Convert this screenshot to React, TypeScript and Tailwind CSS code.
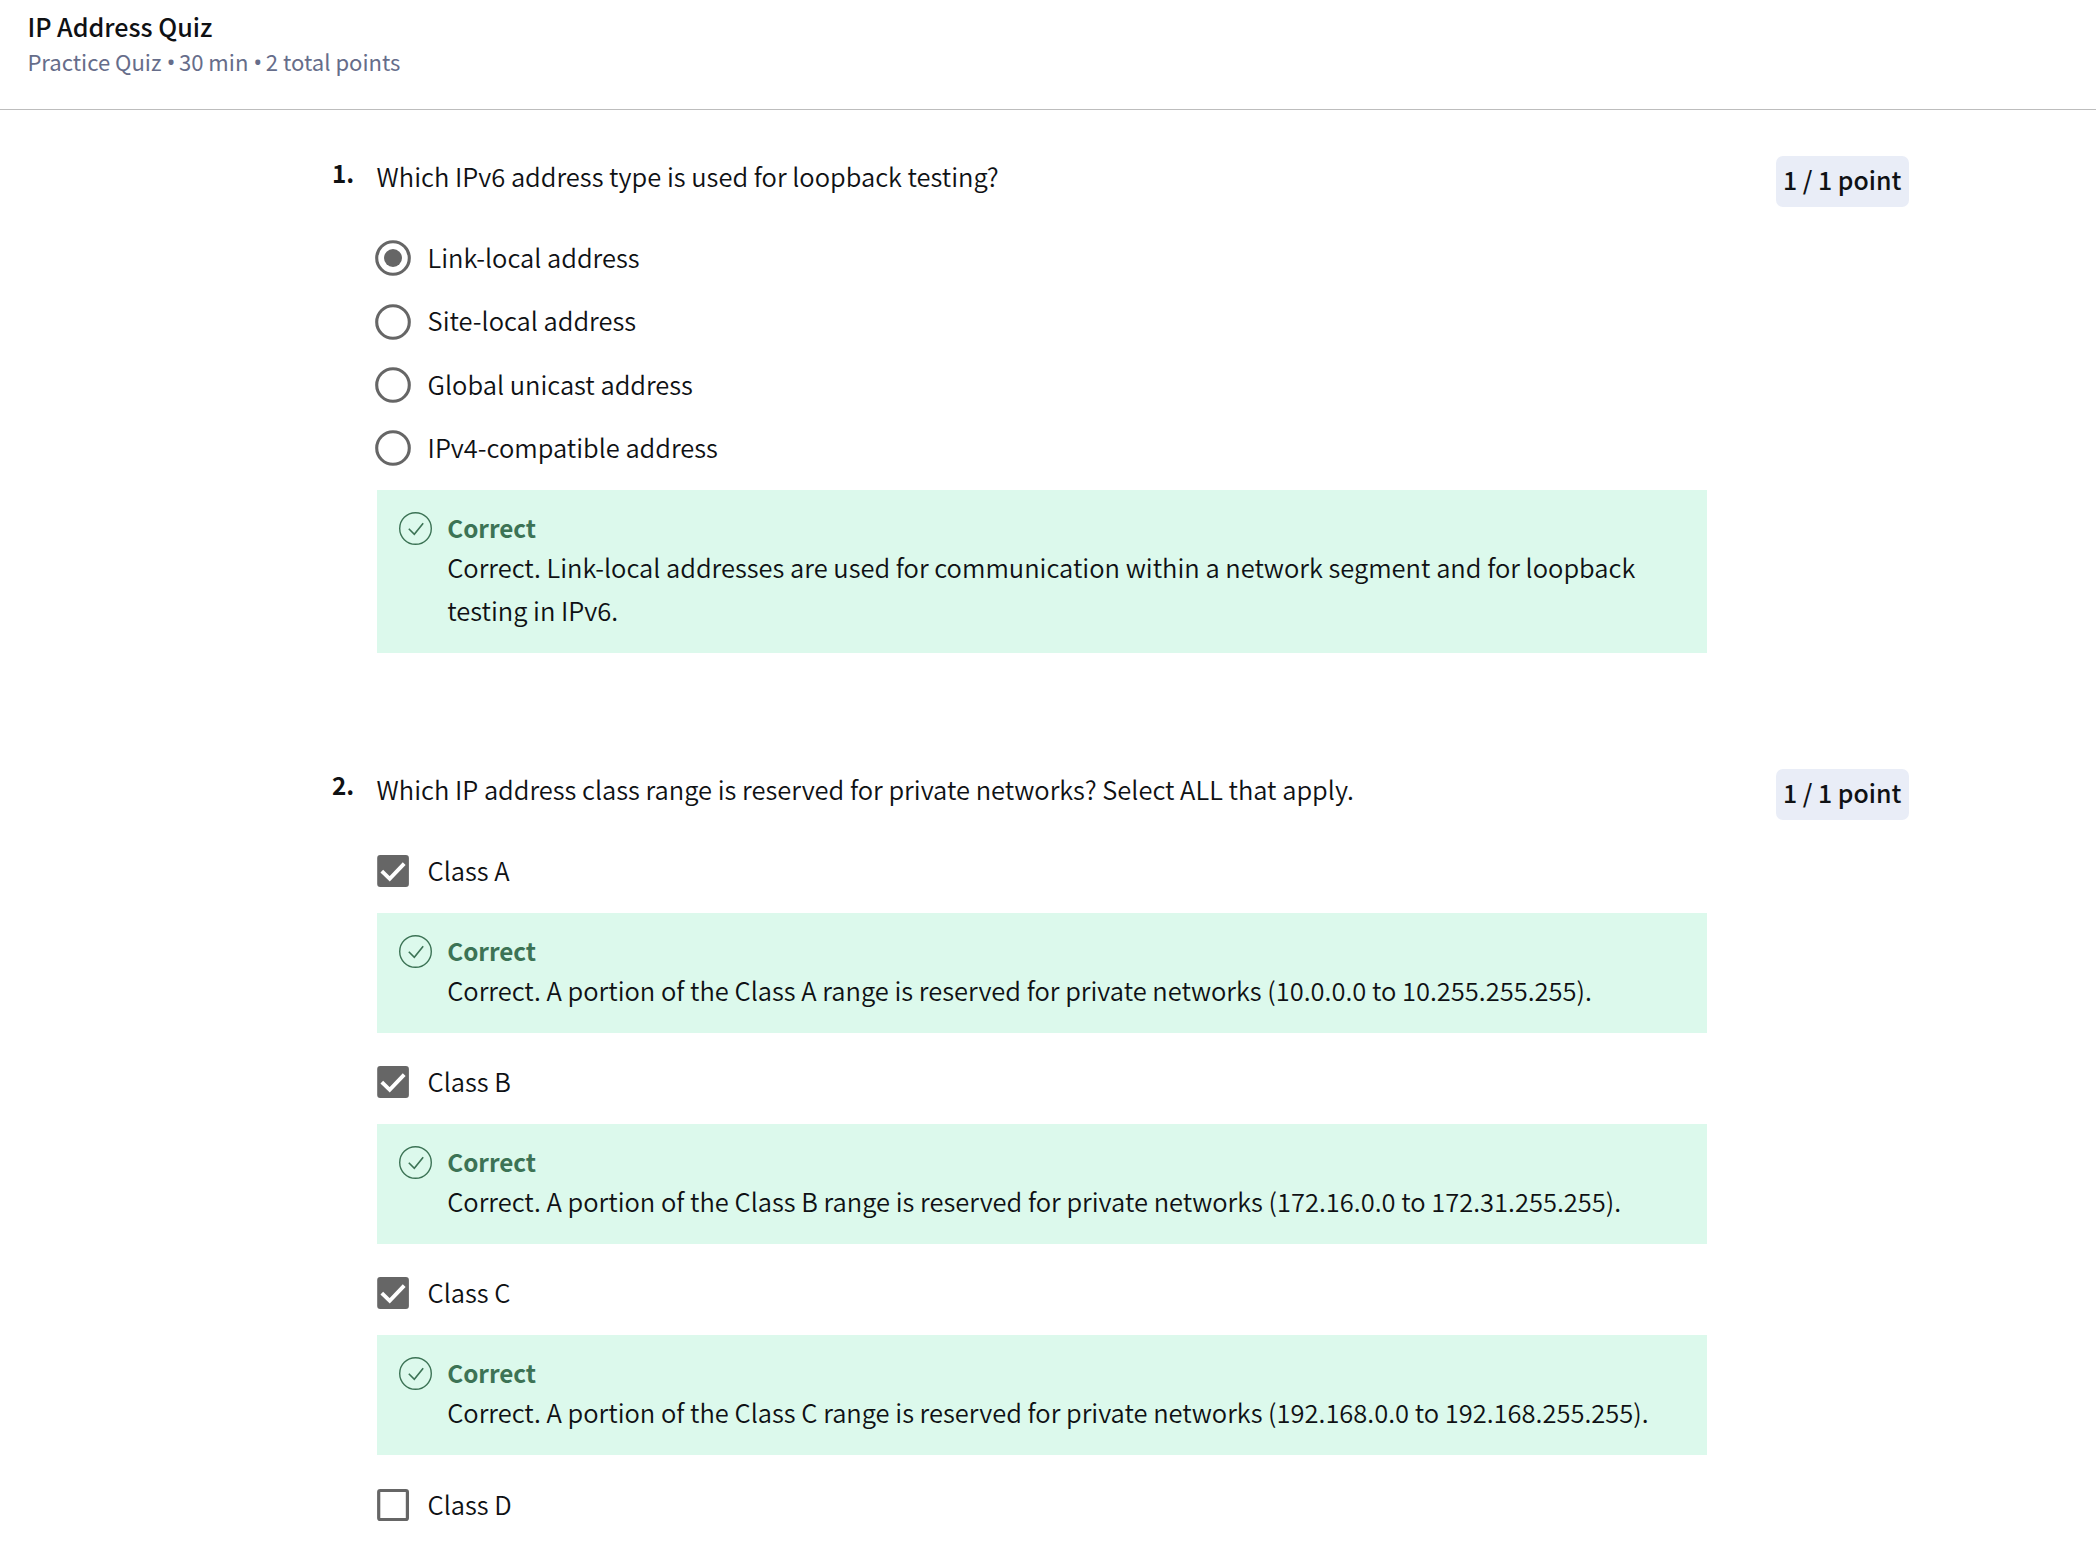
import type { ReactNode } from "react";

function Radio({ checked }: { checked?: boolean }) {
  return (
    <svg className="size-9 shrink-0" viewBox="0 0 36 36" fill="none">
      <circle cx="18" cy="18" r="16.3" stroke="#666666" strokeWidth="3.1" />
      {checked && <circle cx="18" cy="18" r="9" fill="#666666" />}
    </svg>
  );
}

function Checkbox({ checked }: { checked?: boolean }) {
  return (
    <svg className="size-9 shrink-0" viewBox="0 0 36 36" fill="none">
      {checked ? (
        <>
          <rect x="2.2" y="2" width="31.7" height="32" rx="3" fill="#666666" />
          <path d="M6.8 18.2 14.7 25.8 29.2 10.6" stroke="#fff" strokeWidth="3.9" />
        </>
      ) : (
        <rect x="3.7" y="3.5" width="28.7" height="29" rx="1.5" stroke="#666666" strokeWidth="3.2" />
      )}
    </svg>
  );
}

function Bullet() {
  return <span className="inline-block w-[7.6px] text-center font-['Open_Sans'] text-[24px] leading-none">•</span>;
}

function Option({ control, label }: { control: ReactNode; label: string }) {
  return (
    <label className="-ml-0.5 flex h-[63.3px] items-center gap-[17px]">
      {control}
      <span className="-mt-[2.2px] text-[25.47px] leading-9">{label}</span>
    </label>
  );
}

function Feedback({ children }: { children: ReactNode }) {
  return (
    <div className="mt-[10.4px] mb-[17.6px] flex bg-[#dcf9ec] pb-[21.1px] pl-[22px]">
      <svg className="mt-[22px] h-[33px] w-[33px] shrink-0" viewBox="0 0 33 33" fill="none" stroke="#3c7355">
        <circle cx="16.5" cy="16.5" r="15.8" strokeWidth="1.4" />
        <path d="M9.8 16.8 15.3 22.2 24.2 11.2" strokeWidth="1.6" />
      </svg>
      <div className="ml-[15.6px] pt-5">
        <p className="text-[24.3px] leading-9 font-bold text-[#3c7355]">Correct</p>
        <p className="w-[1220px] text-[25.49px] leading-[42.8px]">{children}</p>
      </div>
    </div>
  );
}

function Question({ number, text, children }: { number: string; text: string; children: ReactNode }) {
  return (
    <article className="flex items-start pl-[332px]">
      <span className="w-[44.6px] pt-[0.6px] text-[24.3px] leading-9 font-bold">{number}</span>
      <div className="w-[1330px]">
        <p className="text-[25.49px] leading-[44px]">{text}</p>
        <div className="mt-[28.6px]">{children}</div>
      </div>
      <div className="mt-0.5 ml-[69.4px] h-[51px] w-[133px] rounded-[7px] bg-[#e9edf7] pl-[7px] text-[24.9px] leading-[47px] font-medium whitespace-nowrap">
        1 / 1 point
      </div>
    </article>
  );
}

export default function App() {
  return (
    <div className="h-[1562px] overflow-hidden bg-white font-['Noto_Sans_CJK_SC','Source_Sans_Pro',sans-serif] font-[350] text-[#0f1114]">
      <header className="h-[110px] border-b border-[#bdbdbd] pt-2 pl-[27.4px]">
        <h1 className="text-[25.1px] leading-9 font-medium">IP Address Quiz</h1>
        <p className="-mt-px h-9 text-[22.08px] leading-9 font-normal text-[#666d8a]">
          Practice Quiz <Bullet /> 30 min <Bullet /> 2 total points
        </p>
      </header>
      <main className="flex flex-col gap-[96.4px] pt-[44px]">
        <Question number="1." text="Which IPv6 address type is used for loopback testing?">
          <Option control={<Radio checked />} label="Link-local address" />
          <Option control={<Radio />} label="Site-local address" />
          <Option control={<Radio />} label="Global unicast address" />
          <Option control={<Radio />} label="IPv4-compatible address" />
          <Feedback>
            Correct. Link-local addresses are used for communication within a network segment and for loopback testing in
            IPv6.
          </Feedback>
        </Question>
        <Question number="2." text="Which IP address class range is reserved for private networks? Select ALL that apply.">
          <Option control={<Checkbox checked />} label="Class A" />
          <Feedback>Correct. A portion of the Class A range is reserved for private networks (10.0.0.0 to 10.255.255.255).</Feedback>
          <Option control={<Checkbox checked />} label="Class B" />
          <Feedback>Correct. A portion of the Class B range is reserved for private networks (172.16.0.0 to 172.31.255.255).</Feedback>
          <Option control={<Checkbox checked />} label="Class C" />
          <Feedback>Correct. A portion of the Class C range is reserved for private networks (192.168.0.0 to 192.168.255.255).</Feedback>
          <Option control={<Checkbox />} label="Class D" />
        </Question>
      </main>
    </div>
  );
}
